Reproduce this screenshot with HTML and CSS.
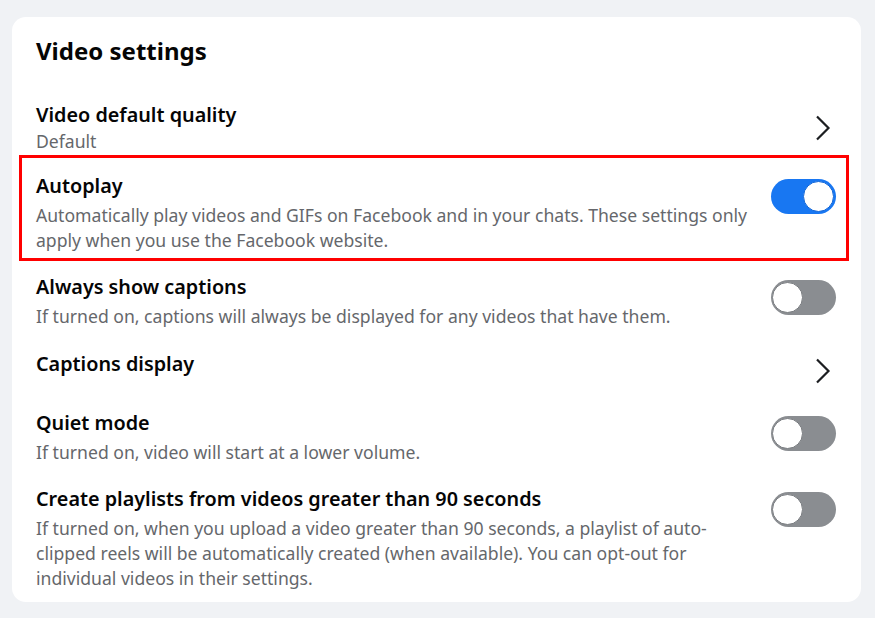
FILE: index.html
```html
<!DOCTYPE html>
<html lang="en">
<head>
    <meta charset="UTF-8">
    <meta name="viewport" content="width=device-width, initial-scale=1.0">
    <title>Video settings</title>
    <link rel="stylesheet" href="styles.css">
</head>
<body>
    <section class="card">
        <h1>Video settings</h1>

        <div class="row first">
            <div class="row-text">
                <h2 class="row-title">Video default quality</h2>
                <p class="row-desc">Default</p>
            </div>
            <div class="row-control chev">
                <svg class="chevron" width="16" height="26" viewBox="0 0 16 26"><path d="M2 1.5 L13.5 13 L2 24.5" fill="none" stroke="#1c1e21" stroke-width="2.2"/></svg>
            </div>
        </div>

        <div class="row highlight">
            <div class="row-text">
                <h2 class="row-title">Autoplay</h2>
                <p class="row-desc">Automatically play videos and GIFs on Facebook and in your chats. These settings only apply when you use the Facebook website.</p>
            </div>
            <div class="row-control">
                <span class="toggle on"><span class="knob"></span></span>
            </div>
        </div>

        <div class="row">
            <div class="row-text">
                <h2 class="row-title">Always show captions</h2>
                <p class="row-desc">If turned on, captions will always be displayed for any videos that have them.</p>
            </div>
            <div class="row-control">
                <span class="toggle"><span class="knob"></span></span>
            </div>
        </div>

        <div class="row no-desc">
            <div class="row-text">
                <h2 class="row-title">Captions display</h2>
            </div>
            <div class="row-control chev">
                <svg class="chevron" width="16" height="26" viewBox="0 0 16 26"><path d="M2 1.5 L13.5 13 L2 24.5" fill="none" stroke="#1c1e21" stroke-width="2.2"/></svg>
            </div>
        </div>

        <div class="row">
            <div class="row-text">
                <h2 class="row-title">Quiet mode</h2>
                <p class="row-desc">If turned on, video will start at a lower volume.</p>
            </div>
            <div class="row-control">
                <span class="toggle"><span class="knob"></span></span>
            </div>
        </div>

        <div class="row">
            <div class="row-text">
                <h2 class="row-title">Create playlists from videos greater than 90 seconds</h2>
                <p class="row-desc">If turned on, when you upload a video greater than 90 seconds, a playlist of auto-clipped reels will be automatically created (when available). You can opt-out for individual videos in their settings.</p>
            </div>
            <div class="row-control">
                <span class="toggle"><span class="knob"></span></span>
            </div>
        </div>
    </section>
</body>
</html>
```

FILE: styles.css
```css
* {
    margin: 0;
    padding: 0;
    box-sizing: border-box;
}

body {
    font-family: 'Noto Sans', 'Open Sans', sans-serif;
    color: #050505;
    background-color: #f0f2f5;
    padding: 17px 14px 0 12px;
}

.card {
    background: #fff;
    border-radius: 14px;
    padding-top: 18.7px;
    height: 585px;
    overflow: hidden;
}

h1 {
    font-size: 24px;
    font-weight: 700;
    line-height: 30px;
    padding: 0 24px;
    margin-bottom: 26.2px;
}

.row {
    display: flex;
    align-items: flex-start;
    margin: 0 12px 0 7px;
    padding: 10px 13px 11px 17px;
}

.row.first .row-desc {
    margin-top: 1px;
}

.row.highlight {
    border: 3px solid #ff0000;
    margin-top: -9.4px;
    margin-bottom: 2.2px;
    padding: 14.5px 10px 5.5px 14px;
}

.row.no-desc {
    margin-top: 1.7px;
    padding-bottom: 15.3px;
}

.row-text {
    flex: 1;
    padding-right: 16px;
}

.row-title {
    font-size: 19.8px;
    font-weight: 600;
    line-height: 26px;
}

.row-desc {
    font-size: 17.6px;
    line-height: 25px;
    color: #65676b;
    margin-top: 4px;
}

.row-control {
    width: 65px;
    display: flex;
    justify-content: flex-end;
    padding-top: 6px;
}

.row-control.chev {
    align-self: center;
    padding-top: 0;
}

.row.no-desc .row-control.chev {
    align-self: flex-start;
    padding-top: 7px;
}

.chevron {
    display: block;
    margin-right: 5px;
}

.toggle {
    position: relative;
    display: block;
    width: 65px;
    height: 35px;
    border-radius: 18px;
    background: #8a8d91;
}

.toggle .knob {
    position: absolute;
    top: 2px;
    left: 1px;
    width: 31px;
    height: 31px;
    border-radius: 50%;
    background: #fff;
    border: 1.5px solid #7a7d81;
}

.toggle.on {
    background: #1877f2;
}

.toggle.on .knob {
    left: auto;
    right: 2px;
    border-color: #1568d8;
}
```
